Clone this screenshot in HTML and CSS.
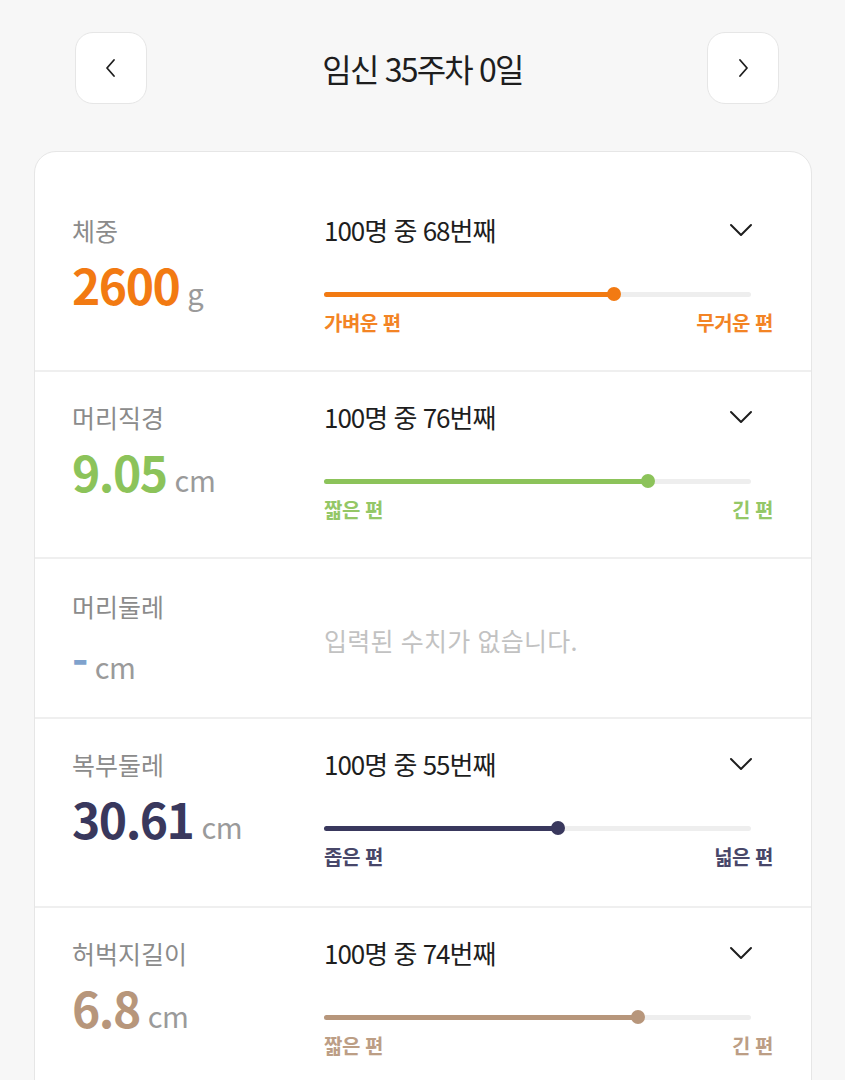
FILE: index.html
```html
<!DOCTYPE html>
<html lang="ko">
<head>
<meta charset="utf-8">
<link rel="stylesheet" href="styles.css">
</head>
<body>
<div class="page">
  <header class="nav">
    <button class="nav-btn" aria-label="이전">
      <svg width="14" height="22" viewBox="0 0 14 22"><path d="M10 3 L3 11 L10 19" fill="none" stroke="#1e1e1e" stroke-width="1.8" stroke-linecap="round" stroke-linejoin="round"/></svg>
    </button>
    <h1 class="title">임신 35주차 0일</h1>
    <button class="nav-btn" aria-label="다음">
      <svg width="14" height="22" viewBox="0 0 14 22"><path d="M4 3 L11 11 L4 19" fill="none" stroke="#1e1e1e" stroke-width="1.8" stroke-linecap="round" stroke-linejoin="round"/></svg>
    </button>
  </header>

  <section class="card">
    <div class="row first c-orange">
      <div class="left">
        <div class="label">체중</div>
        <div class="value"><span class="num">2600</span><span class="unit">g</span></div>
      </div>
      <div class="right">
        <div class="rank"><span>100명 중 68번째</span><svg class="chev" width="26" height="14" viewBox="0 0 26 14"><path d="M3 2 L13 12 L23 2" fill="none" stroke="#1e1e1e" stroke-width="2" stroke-linecap="round" stroke-linejoin="round"/></svg></div>
        <div class="bar"><div class="track"><div class="fill" style="width:67.8%"><span class="dot"></span></div></div></div>
        <div class="ends"><span>가벼운 편</span><span>무거운 편</span></div>
      </div>
    </div>

    <div class="row c-green">
      <div class="left">
        <div class="label">머리직경</div>
        <div class="value"><span class="num">9.05</span><span class="unit">cm</span></div>
      </div>
      <div class="right">
        <div class="rank"><span>100명 중 76번째</span><svg class="chev" width="26" height="14" viewBox="0 0 26 14"><path d="M3 2 L13 12 L23 2" fill="none" stroke="#1e1e1e" stroke-width="2" stroke-linecap="round" stroke-linejoin="round"/></svg></div>
        <div class="bar"><div class="track"><div class="fill" style="width:75.8%"><span class="dot"></span></div></div></div>
        <div class="ends"><span>짧은 편</span><span>긴 편</span></div>
      </div>
    </div>

    <div class="row empty c-blue">
      <div class="left">
        <div class="label">머리둘레</div>
        <div class="value"><span class="num dash">-</span><span class="unit">cm</span></div>
      </div>
      <div class="right center">
        <div class="none">입력된 수치가 없습니다.</div>
      </div>
    </div>

    <div class="row tall c-navy">
      <div class="left">
        <div class="label">복부둘레</div>
        <div class="value"><span class="num">30.61</span><span class="unit">cm</span></div>
      </div>
      <div class="right">
        <div class="rank"><span>100명 중 55번째</span><svg class="chev" width="26" height="14" viewBox="0 0 26 14"><path d="M3 2 L13 12 L23 2" fill="none" stroke="#1e1e1e" stroke-width="2" stroke-linecap="round" stroke-linejoin="round"/></svg></div>
        <div class="bar"><div class="track"><div class="fill" style="width:54.8%"><span class="dot"></span></div></div></div>
        <div class="ends"><span>좁은 편</span><span>넓은 편</span></div>
      </div>
    </div>

    <div class="row last c-brown">
      <div class="left">
        <div class="label">허벅지길이</div>
        <div class="value"><span class="num">6.8</span><span class="unit">cm</span></div>
      </div>
      <div class="right">
        <div class="rank"><span>100명 중 74번째</span><svg class="chev" width="26" height="14" viewBox="0 0 26 14"><path d="M3 2 L13 12 L23 2" fill="none" stroke="#1e1e1e" stroke-width="2" stroke-linecap="round" stroke-linejoin="round"/></svg></div>
        <div class="bar"><div class="track"><div class="fill" style="width:73.6%"><span class="dot"></span></div></div></div>
        <div class="ends"><span>짧은 편</span><span>긴 편</span></div>
      </div>
    </div>
  </section>
</div>
</body>
</html>
```

FILE: styles.css
```css
html, body {
  margin: 0;
  padding: 0;
  background: #f7f7f7;
  font-family: "Noto Sans CJK KR", "Noto Sans", sans-serif;
  color: #1e1e1e;
}

.page {
  width: 845px;
  overflow: hidden;
}

.nav {
  display: flex;
  align-items: center;
  padding: 32px 66px 0 75px;
}

.nav-btn {
  width: 72px;
  height: 72px;
  flex: none;
  background: #ffffff;
  border: 1px solid #e6e6e6;
  border-radius: 18px;
  display: flex;
  align-items: center;
  justify-content: center;
  padding: 0;
}

.title {
  flex: 1;
  margin: 0;
  padding-right: 9px;
  text-align: center;
  font-size: 32px;
  font-weight: 400;
  letter-spacing: -1.8px;
  line-height: 40px;
  color: #1e1e1e;
}

.card {
  margin: 47px 33px 0 34px;
  background: #ffffff;
  border: 1px solid #e6e6e6;
  border-radius: 22px;
}

.row {
  display: flex;
  padding: 29px 38px 34px 37px;
  border-top: 2px solid #efefef;
}

.row.first {
  border-top: none;
  padding-top: 62px;
}

.row.empty {
  padding-top: 31px;
  padding-bottom: 31px;
}

.row.tall {
  padding-bottom: 36px;
}

.row.last {
  padding-bottom: 80px;
}

.c-orange { --c: #f27a12; }
.c-green { --c: #8cc35a; }
.c-blue { --c: #7fa2cd; }
.c-navy { --c: #39385d; }
.c-brown { --c: #b7967b; }

.left {
  width: 252px;
  flex: none;
}

.label {
  height: 32px;
  font-size: 25px;
  line-height: 32px;
  letter-spacing: 0;
  color: #8b8b8b;
}

.value {
  margin-top: 12px;
  height: 52px;
  display: flex;
  align-items: baseline;
  line-height: 52px;
}

.num {
  font-size: 48px;
  font-weight: 700;
  letter-spacing: -1.5px;
  color: var(--c);
}

.num.dash {
  font-size: 44px;
}

.unit {
  margin-left: 8px;
  font-size: 29px;
  font-weight: 400;
  color: #9a9a9a;
  letter-spacing: -0.5px;
}

.right {
  flex: 1;
  min-width: 0;
}

.right.center {
  display: flex;
  align-items: center;
}

.rank {
  display: flex;
  justify-content: space-between;
  align-items: center;
  height: 32px;
  font-size: 26px;
  line-height: 32px;
  letter-spacing: -1px;
  color: #1e1e1e;
}

.chev {
  margin-right: 19px;
}

.bar {
  margin-top: 40px;
  height: 16px;
  display: flex;
  align-items: center;
  margin-right: 22px;
}

.track {
  position: relative;
  flex: 1;
  height: 5px;
  background: #eeeeee;
  border-radius: 3px;
}

.fill {
  position: absolute;
  left: 0;
  top: 0;
  height: 5px;
  border-radius: 3px;
  background: var(--c);
}

.dot {
  position: absolute;
  right: -7px;
  top: -4.5px;
  width: 14px;
  height: 14px;
  border-radius: 50%;
  background: var(--c);
}

.ends {
  margin-top: 8px;
  display: flex;
  justify-content: space-between;
  font-size: 20px;
  line-height: 26px;
  font-weight: 700;
  letter-spacing: -0.5px;
  color: var(--c);
  opacity: 0.92;
}

.none {
  font-size: 25px;
  line-height: 32px;
  letter-spacing: 0.2px;
  color: #c2c2c2;
  margin-top: 4px;
}
```
